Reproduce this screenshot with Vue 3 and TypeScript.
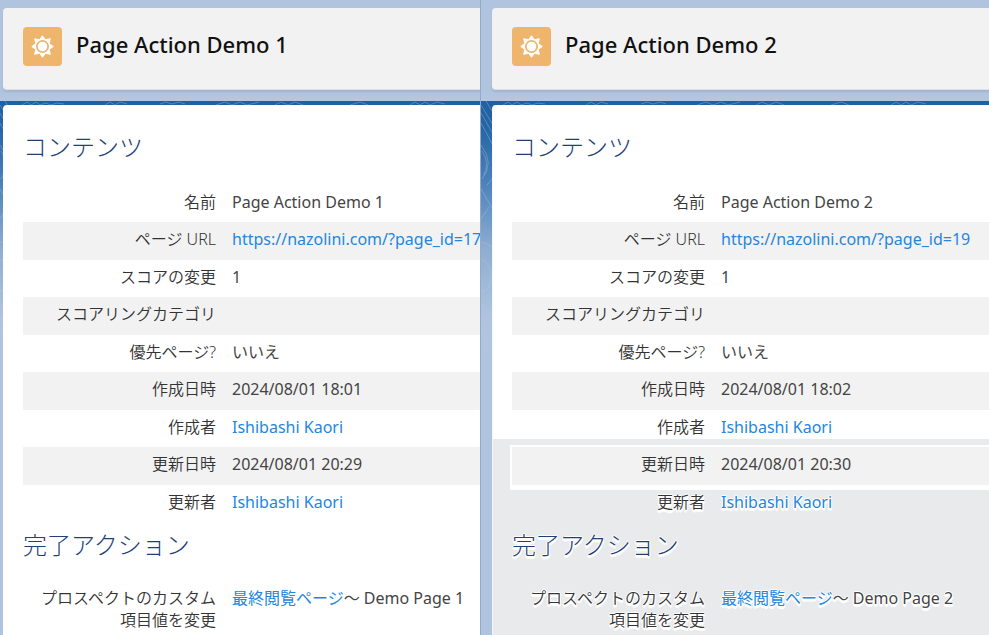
<script setup lang="ts">
interface Field {
  label: string
  value?: string
  href?: string
}

interface Pane {
  id: number
  title: string
  selected: boolean
  fields: Field[]
}

function makeFields(n: number, pageId: number, created: string, updated: string): Field[] {
  return [
    { label: '名前', value: `Page Action Demo ${n}` },
    {
      label: 'ページ URL',
      value: `https://nazolini.com/?page_id=${pageId}`,
      href: `https://nazolini.com/?page_id=${pageId}`,
    },
    { label: 'スコアの変更', value: '1' },
    { label: 'スコアリングカテゴリ' },
    { label: '優先ページ?', value: 'いいえ' },
    { label: '作成日時', value: `2024/08/01 ${created}` },
    { label: '作成者', value: 'Ishibashi Kaori', href: '#' },
    { label: '更新日時', value: `2024/08/01 ${updated}` },
    { label: '更新者', value: 'Ishibashi Kaori', href: '#' },
  ]
}

const panes: Pane[] = [
  { id: 1, title: 'Page Action Demo 1', selected: false, fields: makeFields(1, 17, '18:01', '20:29') },
  { id: 2, title: 'Page Action Demo 2', selected: true, fields: makeFields(2, 19, '18:02', '20:30') },
]
</script>

<template>
  <main class="compare">
    <section v-for="pane in panes" :key="pane.id" class="pane" :class="{ selected: pane.selected }">
      <svg class="contours" viewBox="0 0 480 300" preserveAspectRatio="xMinYMin slice" aria-hidden="true">
        <path d="M0 4 18 34M0 12 16 40M0 22 14 48M5 0 18 22M1 50Q9 62 3 74M0 44Q14 62 1 78M6 84 16 72M0 88 14 112M0 118 8 106M0 141Q16 145 14 154M0 158Q12 164 10 178T0 190M0 202Q14 214 16 236M0 226Q8 236 3 248" />
        <path d="M22 4l5-3 4 3 5-3 4 3 6-2 5 2 6-2 7 1M105 4l5-3 5 3 5-3 7 2M160 3l6-2 6 2 7-2 6 2M216 4l9-3 7 3 8-3 7 3 12-3M275 4l6-3 7 3 7-3 8 3M350 4l10-3 8 3M410 4l5-3 5 3 5-3 5 3 7-3 8 2" />
      </svg>
      <header class="page-header">
        <span class="badge">
          <svg viewBox="0 0 40 40" aria-hidden="true">
            <path
              fill="#fff"
              stroke="#fff"
              stroke-linejoin="round"
              d="M20 9 23 13.1 28 12 26.9 17 31 20 26.9 23 28 28 23 26.9 20 31 17 26.9 12 28 13.1 23 9 20 13.1 17 12 12 17 13.1Z"
            />
            <circle cx="20" cy="20" r="5.8" fill="#fff" stroke="#efb56d" stroke-width="1.8" />
          </svg>
        </span>
        <h1>{{ pane.title }}</h1>
      </header>
      <article class="card">
        <h2>コンテンツ</h2>
        <table class="details">
          <tbody>
            <tr v-for="field in pane.fields" :key="field.label">
              <th scope="row">{{ field.label }}</th>
              <td>
                <a v-if="field.href" :href="field.href">{{ field.value }}</a>
                <template v-else>{{ field.value }}</template>
              </td>
            </tr>
          </tbody>
        </table>
        <h2 class="actions-title">完了アクション</h2>
        <table class="actions">
          <tbody>
            <tr>
              <th scope="row">プロスペクトのカスタム<br />項目値を変更</th>
              <td><a href="#">最終閲覧ページ</a>〜 Demo Page {{ pane.id }}</td>
            </tr>
          </tbody>
        </table>
      </article>
    </section>
  </main>
</template>

<style>
body {
  margin: 0;
  overflow: hidden;
}
</style>

<style scoped>
.compare {
  display: grid;
  grid-template-columns: 480fr 509fr;
  height: 100vh;
  overflow: hidden;
  color: #444;
  font-family: 'Noto Sans', 'Noto Sans CJK JP', sans-serif;
  font-size: 16px;
}

.pane {
  position: relative;
  display: flex;
  flex-direction: column;
  min-width: 0;
  overflow: hidden;
  padding: 8px 0 0 3px;
  background: linear-gradient(#b0c4df 0 90px, #b4c6e1 101px, #205fa1 101px, #2766a6 130px, #4a80b9 180px, #8faed2 250px, #b0c4df 320px);
}

.pane.selected {
  padding-left: 11px;
  border-left: 1px solid #91a9cb;
}

.contours {
  position: absolute;
  top: 101px;
  left: 0;
  width: 480px;
  height: 300px;
  fill: none;
  stroke: #b4cde8;
  stroke-opacity: 0.35;
}

.page-header {
  position: relative;
  box-sizing: border-box;
  display: flex;
  align-items: flex-start;
  gap: 14px;
  height: 82px;
  margin-bottom: 15px;
  padding: 19px 20px;
  border: solid #dcdfe5;
  border-width: 0 0 1px;
  border-radius: 4px 0 0 4px;
  background: #f2f2f2;
  box-shadow: 0 2px 2px #a3b4d1;
}

.badge {
  width: 39px;
  height: 39px;
  border-radius: 4px;
  background: #efb56d;
}

.badge svg {
  display: block;
}

h1 {
  margin: 0;
  color: #111;
  font-size: 22px;
  font-weight: 500;
  line-height: 34px;
  white-space: nowrap;
}

.card {
  position: relative;
  flex: 1;
  padding: 24px 0 0 20px;
  border-radius: 4px 0 0 0;
  background: #fff;
}

h2 {
  margin: 0;
  color: #1d4076;
  font-size: 24px;
  font-weight: 300;
  line-height: 36px;
}

table {
  width: 100%;
  margin-top: 20px;
  border-spacing: 0;
  table-layout: fixed;
}

tr {
  height: 37px;
}

tr:nth-child(even) {
  height: 38px;
  background: #f2f2f2;
}

th,
td {
  padding: 0 8px;
  line-height: 22px;
  white-space: nowrap;
}

th {
  width: 185px;
  color: #333;
  font-weight: 350;
  text-align: right;
}

td {
  font-weight: 400;
  text-align: left;
}

.details th,
.details td {
  padding-bottom: 4px;
}

a {
  color: #2486e0;
  text-decoration: none;
}

.actions-title {
  margin-top: 5px;
}

.actions {
  margin-top: 24px;
}

.actions th,
.actions td {
  vertical-align: top;
}

.selected .card {
  border-left: 1px solid #f6f7f8;
  padding-left: 19px;
  background: linear-gradient(#fff 334px, #e9eaec 334px);
}

.selected tr:nth-child(8) {
  box-shadow: -1px -1px 0 1px #fff, -1px 4px 0 1px #fff;
}

.selected tr:nth-child(9),
.selected .actions-title,
.selected .actions {
  text-shadow: 1px 0 #fff, -1px 0 #fff, 0 1px #fff, 0 -1px #fff, 1px 2px #fff, -1px 2px #fff, 0 3px #fff;
}
</style>
